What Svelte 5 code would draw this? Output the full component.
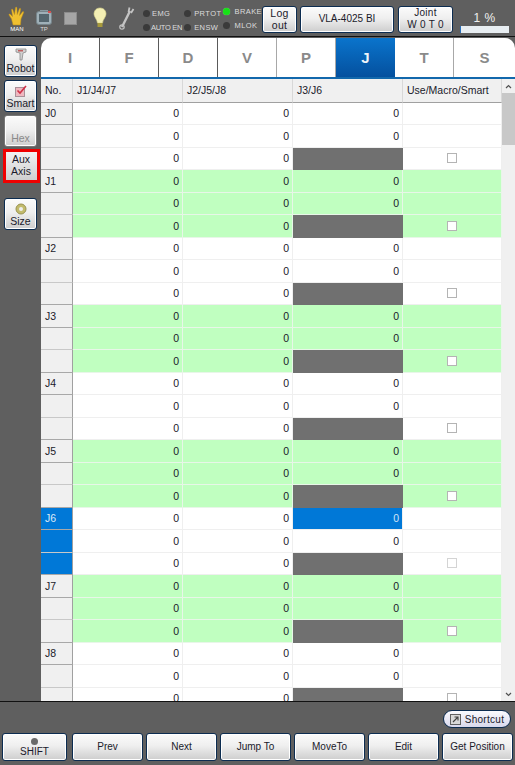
<script>
  const lightsA = [
    { label: 'EMG' },
    { label: 'AUTO EN', tight: true }
  ];
  const lightsB = [
    { label: 'PRTOT' },
    { label: 'ENSW' }
  ];
  const lightsC = [
    { label: 'BRAKE', on: true },
    { label: 'MLOK' }
  ];
  const tabs = ['I', 'F', 'D', 'V', 'P', 'J', 'T', 'S'];
  const groups = Array.from({ length: 9 }, (_, i) => i);
  const actions = ['Prev', 'Next', 'Jump To', 'MoveTo', 'Edit', 'Get Position'];
</script>

{#snippet light(item)}
  <div class="light">
    <span class="dot" class:on={item.on}></span>
    <span class:tight={item.tight}>{item.label}</span>
  </div>
{/snippet}

<div class="screen">
  <header class="top">
    <div class="icons">
      <div class="ico man">
        <svg width="18" height="20" viewBox="0 0 18 20">
          <path d="M5 19 L3.5 13 L1 9 Q0.5 7.5 2 8 L4.5 10.5 L3.5 3.5 Q3.8 2.4 4.8 3.4 L6.5 8.5 L7.5 1.5 Q8.2 0.5 8.9 1.6 L9.2 8.5 L11.5 2.5 Q12.4 1.9 12.7 3 L11.5 9.5 L14.8 5.5 Q15.9 5.3 15.7 6.5 L13 13 L12.5 19 Z" fill="#f0c030" stroke="#b88a18" stroke-width=".5" />
        </svg>
        <span>MAN</span>
      </div>
      <div class="ico tp">
        <svg width="16" height="18" viewBox="0 0 16 18">
          <path d="M4 2 L12 2 L12 4 L4 4 Z" fill="#8a9aa2" />
          <rect x=".5" y="3.5" width="15" height="13" rx="2.5" fill="#9fb0b8" stroke="#76848a" />
          <rect x="3" y="6" width="10" height="8" fill="#55666e" />
          <rect x="12" y="3" width="3" height="2" fill="#d85050" />
        </svg>
        <span>TP</span>
      </div>
      <div class="square"></div>
      <svg class="bulb" width="14" height="22" viewBox="0 0 14 22">
        <path d="M7 1 C3 1 1 4 1 7 C1 10 4 12 4.500 16 L9.500 16 C10 12 13 10 13 7 C13 4 11 1 7 1 Z" fill="#f4efb4" stroke="#dcd68c" stroke-width=".6" />
        <rect x="4.500" y="16" width="5" height="4" fill="#a89a3c" />
      </svg>
      <svg class="wrench" width="16" height="24" viewBox="0 0 16 24">
        <path d="M3 21 L11 5" stroke="#c4c4c4" stroke-width="2.400" fill="none" />
        <circle cx="3" cy="21" r="2.200" fill="none" stroke="#c4c4c4" stroke-width="1.200" />
        <path d="M9.500 6 L10.500 1.500 M12 7 L14.500 3" stroke="#c4c4c4" stroke-width="1.800" fill="none" />
      </svg>
    </div>
    <div class="lights">
      <div class="col col-a">
        {#each lightsA as item}{@render light(item)}{/each}
      </div>
      <div class="col col-b">
        {#each lightsB as item}{@render light(item)}{/each}
      </div>
      <div class="col col-c">
        {#each lightsC as item}{@render light(item)}{/each}
      </div>
    </div>
    <button class="btn logout">Log<br />out</button>
    <button class="btn model">VLA-4025 BI</button>
    <button class="btn joint">Joint<br />W 0 T 0</button>
    <div class="speed">
      <span>1 %</span>
      <div class="bar"><div class="fill" style:width="2%"></div></div>
    </div>
  </header>

  <div class="middle">
    <aside class="side">
      <button class="btn sidebtn">
        <svg width="12" height="14" viewBox="0 0 12 14">
          <path d="M1 1 L11 1 L11 4 L8 5 L7 12 L5 12 L5 5 L1 4 Z" fill="#d0d0d0" stroke="#8c8c8c" stroke-width=".8" />
          <rect x="3" y="2" width="5" height="1.500" fill="#c06060" />
        </svg>
        <span>Robot</span>
      </button>
      <button class="btn sidebtn">
        <svg width="12" height="12" viewBox="0 0 12 12">
          <rect x=".5" y="2.500" width="9" height="9" fill="#eeb8c0" stroke="#a89098" />
          <path d="M2.500 5.500 L5 8 L11 1" fill="none" stroke="#d03048" stroke-width="1.600" />
        </svg>
        <span>Smart</span>
      </button>
      <button class="btn sidebtn hex"><span>Hex</span></button>
      <div class="aux">Aux<br />Axis</div>
      <button class="btn sidebtn size">
        <svg width="12" height="12" viewBox="0 0 12 12">
          <circle cx="6" cy="6" r="5" fill="#c2bb6c" stroke="#9a9350" />
          <circle cx="6" cy="6" r="2" fill="#eeeeee" />
        </svg>
        <span>Size</span>
      </button>
    </aside>

    <main class="panel">
      <nav class="tabs">
        {#each tabs as tab, i}
          <div class="tab" class:active={tab === 'J'} class:soft={i > 2}>{tab}</div>
        {/each}
      </nav>
      <div class="tablewrap">
        <div class="table">
          <div class="row head">
            <div class="th first">No.</div>
            <div class="th">J1/J4/J7</div>
            <div class="th">J2/J5/J8</div>
            <div class="th">J3/J6</div>
            <div class="th">Use/Macro/Smart</div>
          </div>
          <div class="body">
            {#each groups as g}
              {#each [0, 1, 2] as r}
                <div class="row" class:green={g % 2 === 1}>
                  <div class="name" class:sel={g === 6} class:inner={r === 1}>{r === 0 ? `J${g}` : ''}</div>
                  <div class="num">0</div>
                  <div class="num">0</div>
                  {#if r === 2}
                    <div class="num dark"></div>
                  {:else}
                    <div class="num" class:cur={g === 6 && r === 0}>0</div>
                  {/if}
                  <div class="use">
                    {#if r === 2}<span class="check" class:dim={g === 6}></span>{/if}
                  </div>
                </div>
              {/each}
            {/each}
          </div>
        </div>
        <div class="scroll">
          <svg class="arrow" width="7" height="5" viewBox="0 0 7 5"><path d="M1 4 L3.500 1.500 L6 4" fill="none" stroke="#505050" stroke-width="1.200" /></svg>
          <div class="thumb"></div>
          <div class="track"></div>
          <svg class="arrow" width="7" height="5" viewBox="0 0 7 5"><path d="M1 1 L3.500 3.500 L6 1" fill="none" stroke="#505050" stroke-width="1.200" /></svg>
        </div>
      </div>
    </main>
  </div>

  <footer class="foot">
    <div class="shortcutline">
      <button class="shortcut">
        <svg width="11" height="11" viewBox="0 0 11 11">
          <rect x=".5" y=".5" width="10" height="10" fill="#d8d8d8" stroke="#606060" />
          <path d="M3 8 L8 3 M4.500 3 L8 3 L8 6.500" fill="none" stroke="#404040" stroke-width="1.100" />
        </svg>
        Shortcut
      </button>
    </div>
    <div class="actions">
      <button class="btn action shift">
        <span class="shiftdot"></span>
        <span>SHIFT</span>
      </button>
      {#each actions as a}
        <button class="btn action">{a}</button>
      {/each}
    </div>
  </footer>
</div>

<style>
  :global(body) {
    margin: 0;
    background: #5f5f5f;
  }

  .screen {
    width: 515px;
    height: 765px;
    display: flex;
    flex-direction: column;
    background: #5f5f5f;
    overflow: hidden;
    font-family: "Liberation Sans", Arial, sans-serif;
    color: #1a1a2a;
  }

  .top {
    height: 36px;
    flex: none;
    display: flex;
    align-items: center;
    border-bottom: 1px solid #111;
    box-sizing: content-box;
  }

  .icons {
    display: flex;
    align-items: center;
    width: 142px;
    flex: none;
    padding-left: 8px;
    box-sizing: border-box;
  }

  .ico {
    display: flex;
    flex-direction: column;
    align-items: center;
    color: #fff;
    font-size: 6px;
    line-height: 6px;
    height: 27px;
    justify-content: flex-end;
  }

  .man {
    width: 18px;
  }

  .tp {
    width: 16px;
    margin-left: 10px;
    color: #ddd;
  }

  .square {
    width: 11px;
    height: 11px;
    margin-left: 12px;
    background: #a6a6a6;
    border: 1px solid #8c8c8c;
  }

  .bulb {
    margin-left: 16px;
  }

  .wrench {
    margin-left: 12px;
  }

  .lights {
    width: 120px;
    flex: none;
    display: flex;
    padding-left: 1px;
    box-sizing: border-box;
    font-size: 7.500px;
    letter-spacing: 0.4px;
    color: #dcdcdc;
  }

  .col {
    display: flex;
    flex-direction: column;
    gap: 2px;
    padding-top: 4px;
  }

  .col-a {
    width: 43px;
  }

  .col-b {
    width: 40px;
  }

  .col-b .light {
    gap: 3px;
  }

  .col-c {
    padding-top: 2px;
  }

  .col-c .light {
    gap: 5px;
  }

  .light {
    display: flex;
    align-items: center;
    height: 12px;
    gap: 2px;
    white-space: nowrap;
  }

  .tight {
    letter-spacing: -0.3px;
    margin-left: -1px;
  }

  .dot {
    width: 7px;
    height: 7px;
    border-radius: 50%;
    background: #3a3a3a;
    flex: none;
  }

  .dot.on {
    background: #16e016;
    box-shadow: 0 0 1px #6cff6c;
  }

  .btn {
    padding: 0;
    font-family: inherit;
    color: #1a1a2a;
    border: 1px solid #0c2c50;
    border-radius: 3px;
    background: linear-gradient(#fbfbfb, #efefef 45%, #cdcdcd);
    box-shadow: inset 0 0 0 1px #fff;
    font-size: 10px;
    line-height: 12px;
    text-align: center;
  }

  .logout {
    width: 35px;
    height: 27px;
    margin-top: 2px;
    flex: none;
    font-size: 10.500px;
    letter-spacing: 0.3px;
  }

  .model {
    width: 94px;
    height: 27px;
    margin-top: 2px;
    flex: none;
    margin-left: 3px;
  }

  .joint {
    width: 55px;
    height: 27px;
    margin-top: 2px;
    flex: none;
    margin-left: 4px;
    letter-spacing: 0.3px;
  }

  .speed {
    width: 49px;
    margin-left: 7px;
    flex: none;
    display: flex;
    flex-direction: column;
    align-items: center;
    color: #f0f0f0;
    font-size: 12px;
    line-height: 13px;
    letter-spacing: 0.5px;
    padding-top: 8px;
    box-sizing: border-box;
  }

  .bar {
    width: 49px;
    height: 7px;
    margin-top: 1px;
    background: #e8eef2;
  }

  .fill {
    height: 100%;
    background: #2a6fb8;
  }

  .middle {
    flex: 1;
    min-height: 0;
    display: flex;
  }

  .side {
    width: 41px;
    flex: none;
    display: flex;
    flex-direction: column;
    align-items: center;
    padding-top: 8px;
    box-sizing: border-box;
  }

  .sidebtn {
    width: 33px;
    height: 32px;
    margin-bottom: 3px;
    display: flex;
    flex-direction: column;
    align-items: center;
    justify-content: flex-end;
    font-size: 10.500px;
    padding-bottom: 2px;
    box-sizing: border-box;
    flex: none;
  }

  .hex {
    color: #8a8a8a;
    border-color: #777;
    margin-bottom: 2px;
  }

  .aux {
    width: 31px;
    height: 27px;
    margin-left: 1px;
    border: 3px solid #f00000;
    background: linear-gradient(#f2f2f2, #cfcfcf);
    font-size: 10.500px;
    line-height: 12px;
    text-align: center;
    padding-top: 1px;
  }

  .size {
    margin-top: 15px;
  }

  .panel {
    flex: 1;
    min-width: 0;
    display: flex;
    flex-direction: column;
  }

  .tabs {
    height: 39px;
    flex: none;
    margin-top: 1px;
    display: grid;
    grid-template-columns: repeat(7, 59px) 1fr;
    background: #fff;
    border-radius: 10px 10px 0 0;
    overflow: hidden;
  }

  .tab {
    display: flex;
    align-items: center;
    justify-content: center;
    font-size: 15px;
    font-weight: bold;
    color: #8a8a8a;
    border-right: 1px solid #5a5a5a;
    box-sizing: border-box;
  }

  .tab.soft {
    border-right-color: #a8a8a8;
  }

  .tab:last-child {
    border-right: 0;
  }

  .tab.active {
    background: linear-gradient(#0a74cc, #04509e);
    color: #eef4fa;
    border-right: 0;
  }

  .tablewrap {
    flex: 1;
    min-height: 0;
    display: flex;
    border-top: 2px solid #1268ac;
    background: #fff;
  }

  .table {
    flex: 1;
    min-width: 0;
    overflow: hidden;
  }

  .row {
    display: grid;
    grid-template-columns: 32px 110px 110px 110px 1fr;
    height: 22.500px;
    font-size: 10.500px;
    background: #fff;
  }

  .row > div {
    border-right: 1px solid #efefef;
    border-bottom: 1px solid #efefef;
    box-sizing: border-box;
    display: flex;
    align-items: center;
  }

  .row.green {
    background: #c0ffc0;
  }

  .row.green > div {
    border-color: #e8f6e8;
  }

  .row.head {
    height: 23.500px;
    background: #f0f0f0;
  }

  .row.head > .th {
    padding-left: 4px;
    border-right: 1px solid #d8d8d8;
    border-bottom: 1px solid #a0a0a0;
  }

  .row > .name,
  .row.green > .name {
    background: #f0f0f0;
    border-right: 1px solid #a0a0a0;
    border-bottom: 1px solid #a8a8a8;
    padding-left: 4px;
  }

  .row > .name.inner,
  .row.green > .name.inner {
    border-bottom-color: #c8c8c8;
  }

  .row > .name.sel {
    background: #0078d7;
    color: #dceaf8;
  }

  .row > .num {
    justify-content: flex-end;
    padding-right: 3px;
  }

  .row > .num.dark,
  .row.green > .num.dark {
    background: #707070;
    border-color: #707070;
  }

  .row > .num.cur {
    background: #0078d7;
    color: #cfe4f8;
  }

  .use {
    justify-content: center;
  }

  .check {
    width: 8px;
    height: 8px;
    border: 1px solid #b4b4b4;
    background: #fff;
  }

  .check.dim {
    border-color: #d4d4d4;
  }

  .scroll {
    width: 13px;
    flex: none;
    display: flex;
    flex-direction: column;
    align-items: center;
    background: #f0f0f0;
  }

  .arrow {
    flex: none;
    margin: 5px 0 4px;
  }

  .thumb {
    width: 13px;
    height: 52px;
    flex: none;
    background: #c8c8c8;
  }

  .track {
    flex: 1;
  }

  .foot {
    height: 64px;
    flex: none;
    border-top: 1px solid #111;
    display: flex;
    flex-direction: column;
    box-sizing: border-box;
  }

  .shortcutline {
    display: flex;
    justify-content: flex-end;
    padding: 8px 4px 0 0;
    height: 31px;
    box-sizing: border-box;
    flex: none;
  }

  .shortcut {
    width: 68px;
    height: 18px;
    padding: 0;
    display: flex;
    align-items: center;
    justify-content: center;
    gap: 4px;
    font-family: inherit;
    font-size: 10px;
    letter-spacing: 0.3px;
    color: #1a1a2a;
    border: 1px solid #0c2c50;
    border-radius: 9px;
    background: linear-gradient(#fafafe, #d8d8ec);
  }

  .actions {
    display: flex;
    gap: 3px;
    padding-left: 2px;
  }

  .action {
    width: 71px;
    height: 28px;
    flex: none;
  }

  .shift {
    width: 65px;
    margin-right: 2px;
    display: flex;
    flex-direction: column;
    align-items: center;
    justify-content: flex-end;
    padding-bottom: 2px;
    box-sizing: border-box;
  }

  .shiftdot {
    width: 7px;
    height: 7px;
    border-radius: 50%;
    background: #6a6a6a;
    margin-bottom: 1px;
  }
</style>
